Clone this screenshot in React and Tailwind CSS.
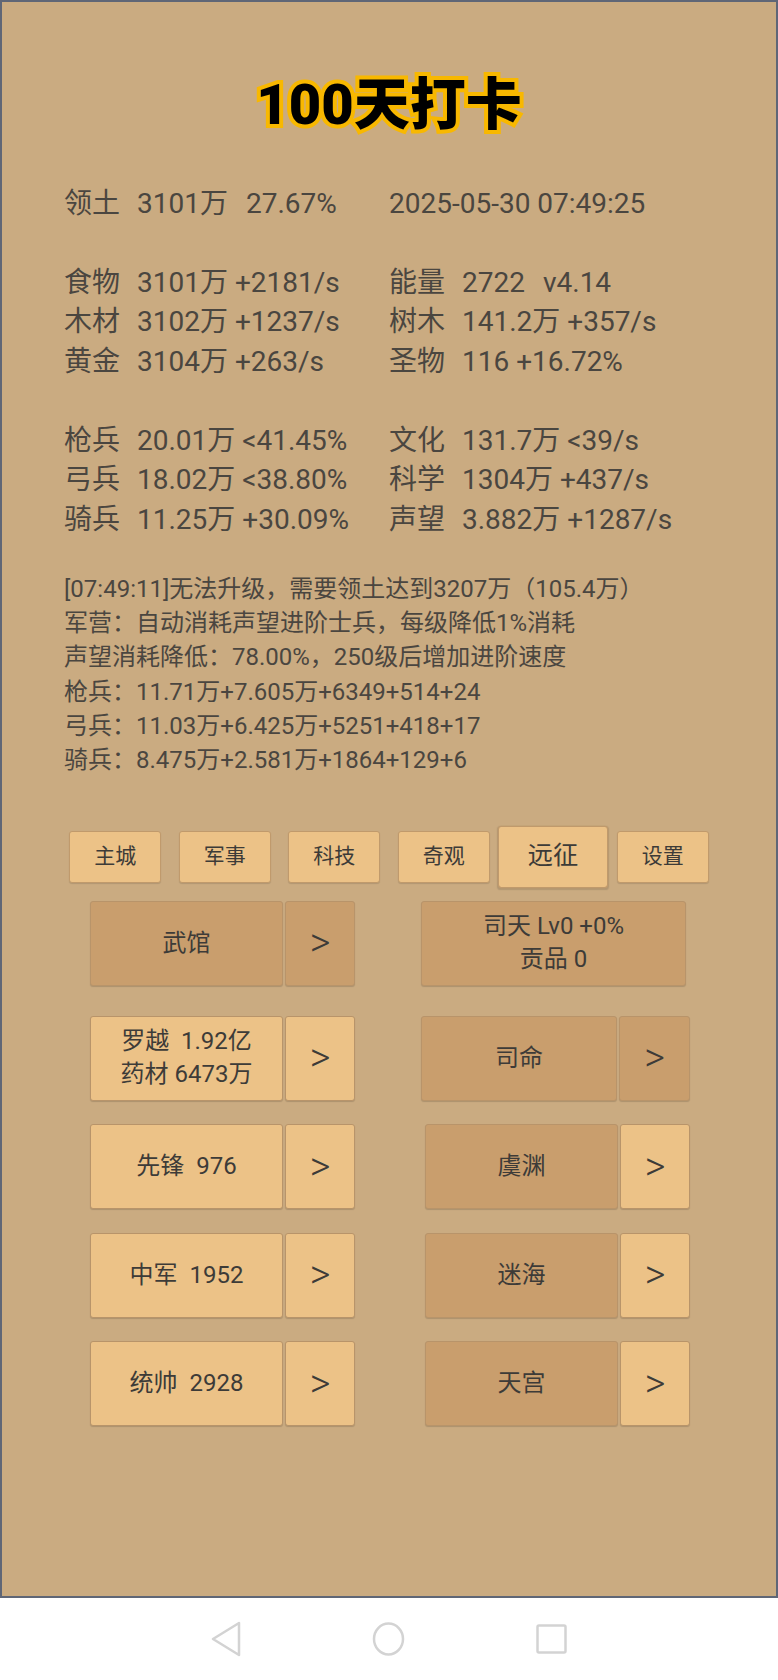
import React from 'react';

const FONT = "font-['Roboto','Noto_Sans_CJK_SC',sans-serif]";

const statRows = [
  { left: ['领土', '3101万', '27.67%'], right: ['2025-05-30 07:49:25'] },
  null,
  { left: ['食物', '3101万 +2181/s'], right: ['能量', '2722', 'v4.14'] },
  { left: ['木材', '3102万 +1237/s'], right: ['树木', '141.2万 +357/s'] },
  { left: ['黄金', '3104万 +263/s'], right: ['圣物', '116 +16.72%'] },
  null,
  { left: ['枪兵', '20.01万 <41.45%'], right: ['文化', '131.7万 <39/s'] },
  { left: ['弓兵', '18.02万 <38.80%'], right: ['科学', '1304万 +437/s'] },
  { left: ['骑兵', '11.25万 +30.09%'], right: ['声望', '3.882万 +1287/s'] },
];

const messages = [
  '[07:49:11]无法升级，需要领土达到3207万（105.4万）',
  '军营：自动消耗声望进阶士兵，每级降低1%消耗',
  '声望消耗降低：78.00%，250级后增加进阶速度',
  '枪兵：11.71万+7.605万+6349+514+24',
  '弓兵：11.03万+6.425万+5251+418+17',
  '骑兵：8.475万+2.581万+1864+129+6',
];

const tabs = ['主城', '军事', '科技', '奇观', '远征', '设置'];

function StatCell({ parts }) {
  if (parts.length === 1) return <span>{parts[0]}</span>;
  return (
    <span className="flex items-center whitespace-pre">
      <span className="w-[73px] shrink-0">{parts[0]}</span>
      <span>{parts[1]}</span>
      {parts[2] && <span className="ml-[18px]">{parts[2]}</span>}
    </span>
  );
}

function Btn({ children, dark, w, big }) {
  return (
    <div
      className={`${w} h-[85px] shrink-0 flex items-center justify-center text-center rounded-[3px] border border-[#b8946a] shadow-[0_1px_1px_rgba(0,0,0,0.15)] whitespace-pre ${
        dark ? 'bg-[#c99e6d]' : 'bg-[#ecc287]'
      } ${big ? 'text-[40px] font-light leading-none' : 'text-[24px] leading-[33px]'} text-[#3d3b38]`}
    >
      {children}
    </div>
  );
}

function Row({ left, leftDark, right, mt, gap = 'ml-[66px]' }) {
  return (
    <div className={`flex pl-[88px] ${mt}`}>
      <div className="flex gap-[2px]">
        <Btn dark={leftDark} w="w-[193px]">{left}</Btn>
        <Btn dark={leftDark} w="w-[70px]" big>&gt;</Btn>
      </div>
      <div className={`flex gap-[2px] ${gap}`}>{right}</div>
    </div>
  );
}

export default function App() {
  return (
    <div className={`w-[778px] h-[1680px] bg-white flex flex-col ${FONT}`}>
      {/* Game panel */}
      <div className="h-[1598px] shrink-0 border-2 border-[#5f6676] bg-[#caab81] flex flex-col">
        {/* Title */}
        <div className="mt-[75px] h-[56px] flex items-center justify-center">
          <h1 className="text-[56px] leading-none font-black text-black [-webkit-text-stroke:8px_#f8b800] [paint-order:stroke_fill]">
            100天打卡
          </h1>
        </div>

        {/* Stats */}
        <div className="mt-[51px] pl-[62px] text-[28px] text-[#4a4640]">
          {statRows.map((row, i) =>
            row ? (
              <div key={i} className="h-[39.5px] flex items-center">
                <div className="w-[325px] shrink-0">
                  <StatCell parts={row.left} />
                </div>
                <div>
                  <StatCell parts={row.right} />
                </div>
              </div>
            ) : (
              <div key={i} className="h-[39.5px]" />
            )
          )}
        </div>

        {/* Log */}
        <div className="mt-[32px] pl-[62px] text-[24px] leading-[34.35px] text-[#4a4640]">
          {messages.map((m) => (
            <div key={m}>{m}</div>
          ))}
        </div>

        {/* Tabs */}
        <div className="mt-[53px] flex justify-center gap-[17.5px]">
          {tabs.map((t) => (
            <div
              key={t}
              className={`w-[92px] h-[52px] flex items-center justify-center rounded-[3px] border border-[#c09a6c] bg-[#ecc287] text-[21px] text-[#3d3b38] shadow-[0_1px_1px_rgba(0,0,0,0.12)] ${
                t === '远征' ? 'scale-[1.2]' : ''
              }`}
            >
              {t}
            </div>
          ))}
        </div>

        {/* Buildings */}
        <Row
          mt="mt-[18px]"
          left="武馆"
          leftDark
          right={<Btn dark w="w-[265px]">{'司天 Lv0 +0%\n贡品 0'}</Btn>}
        />
        <Row
          mt="mt-[30px]"
          left={'罗越  1.92亿\n药材 6473万'}
          right={
            <>
              <Btn dark w="w-[196px]">司命</Btn>
              <Btn dark w="w-[71px]" big>&gt;</Btn>
            </>
          }
        />
        {[
          ['先锋  976', '虞渊'],
          ['中军  1952', '迷海'],
          ['统帅  2928', '天宫'],
        ].map(([l, r]) => (
          <Row
            key={l}
            mt="mt-[23.5px]"
            left={l}
            gap="ml-[70px]"
            right={
              <>
                <Btn dark w="w-[193px]">{r}</Btn>
                <Btn w="w-[70px]" big>&gt;</Btn>
              </>
            }
          />
        ))}
      </div>

      {/* Android nav bar */}
      <div className="flex-1 flex items-center justify-center">
        <svg width="778" height="82" viewBox="0 0 778 82">
          <g fill="none" stroke="#d3d3d3" strokeWidth="2.5" strokeLinejoin="round">
            <path d="M239 25 L239 57 L213 41 Z" />
            <ellipse cx="388.5" cy="41" rx="14.5" ry="15.5" />
            <rect x="537.5" y="27.5" width="28" height="27" rx="1.5" />
          </g>
        </svg>
      </div>
    </div>
  );
}
